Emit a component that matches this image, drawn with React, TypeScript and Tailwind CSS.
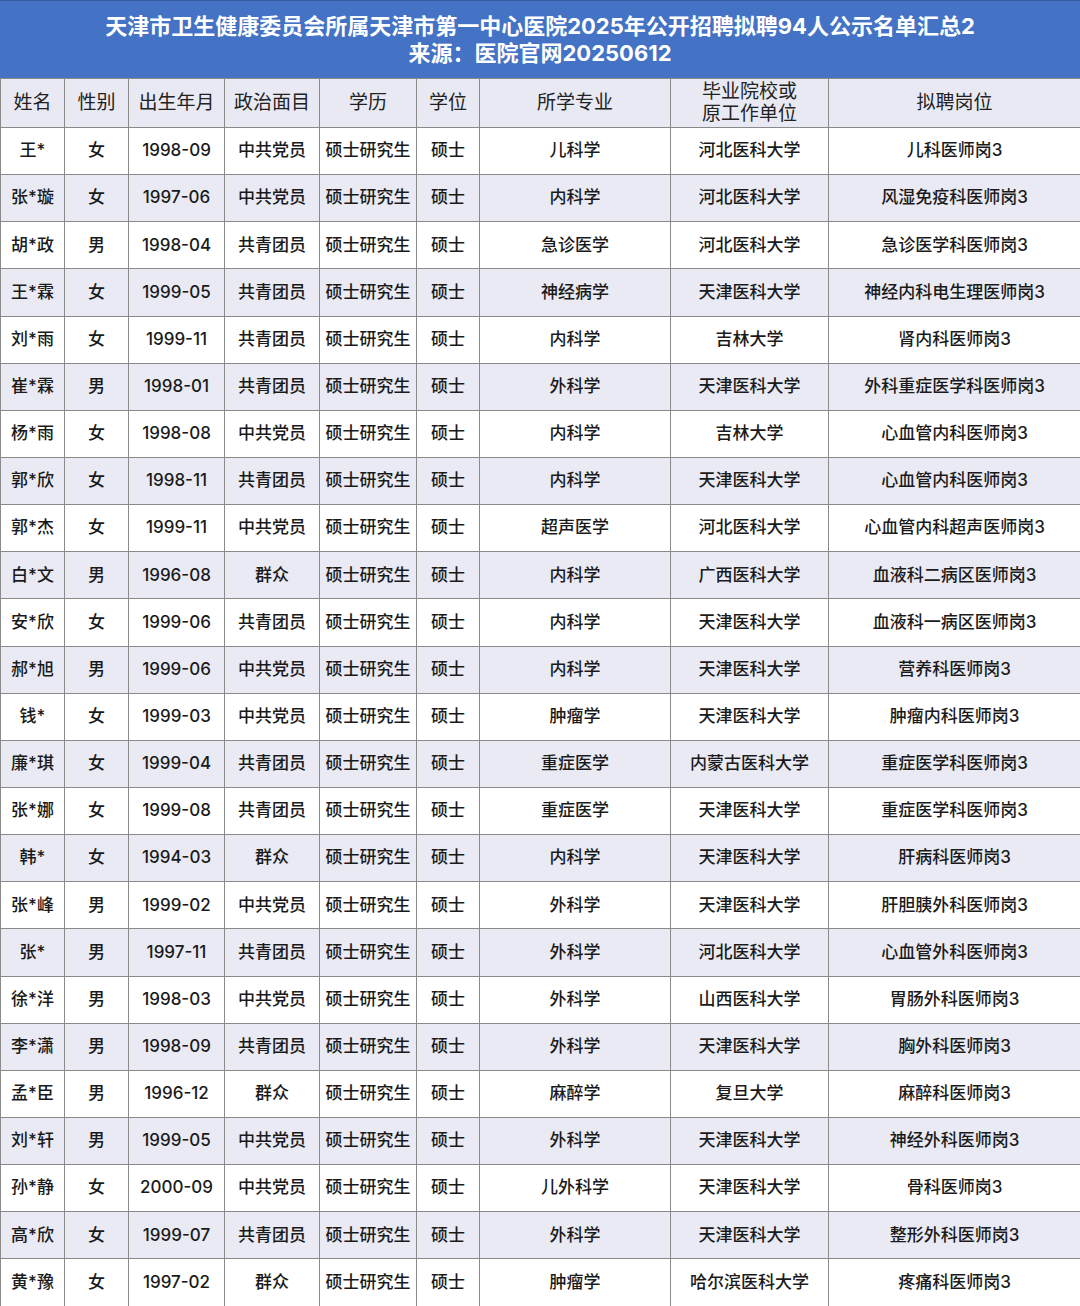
import React from 'react'

const headers = ['姓名', '性别', '出生年月', '政治面目', '学历', '学位', '所学专业', '毕业院校或\n原工作单位', '拟聘岗位']
const widths = ['w-[64px]', 'w-[64px]', 'w-[96px]', 'w-[95px]', 'w-[97px]', 'w-[63px]', 'w-[191px]', 'w-[158px]', 'w-[252px]']

const rows: string[][] = [
  ['王*', '女', '1998-09', '中共党员', '硕士研究生', '硕士', '儿科学', '河北医科大学', '儿科医师岗3'],
  ['张*璇', '女', '1997-06', '中共党员', '硕士研究生', '硕士', '内科学', '河北医科大学', '风湿免疫科医师岗3'],
  ['胡*政', '男', '1998-04', '共青团员', '硕士研究生', '硕士', '急诊医学', '河北医科大学', '急诊医学科医师岗3'],
  ['王*霖', '女', '1999-05', '共青团员', '硕士研究生', '硕士', '神经病学', '天津医科大学', '神经内科电生理医师岗3'],
  ['刘*雨', '女', '1999-11', '共青团员', '硕士研究生', '硕士', '内科学', '吉林大学', '肾内科医师岗3'],
  ['崔*霖', '男', '1998-01', '共青团员', '硕士研究生', '硕士', '外科学', '天津医科大学', '外科重症医学科医师岗3'],
  ['杨*雨', '女', '1998-08', '中共党员', '硕士研究生', '硕士', '内科学', '吉林大学', '心血管内科医师岗3'],
  ['郭*欣', '女', '1998-11', '共青团员', '硕士研究生', '硕士', '内科学', '天津医科大学', '心血管内科医师岗3'],
  ['郭*杰', '女', '1999-11', '中共党员', '硕士研究生', '硕士', '超声医学', '河北医科大学', '心血管内科超声医师岗3'],
  ['白*文', '男', '1996-08', '群众', '硕士研究生', '硕士', '内科学', '广西医科大学', '血液科二病区医师岗3'],
  ['安*欣', '女', '1999-06', '共青团员', '硕士研究生', '硕士', '内科学', '天津医科大学', '血液科一病区医师岗3'],
  ['郝*旭', '男', '1999-06', '中共党员', '硕士研究生', '硕士', '内科学', '天津医科大学', '营养科医师岗3'],
  ['钱*', '女', '1999-03', '中共党员', '硕士研究生', '硕士', '肿瘤学', '天津医科大学', '肿瘤内科医师岗3'],
  ['廉*琪', '女', '1999-04', '共青团员', '硕士研究生', '硕士', '重症医学', '内蒙古医科大学', '重症医学科医师岗3'],
  ['张*娜', '女', '1999-08', '共青团员', '硕士研究生', '硕士', '重症医学', '天津医科大学', '重症医学科医师岗3'],
  ['韩*', '女', '1994-03', '群众', '硕士研究生', '硕士', '内科学', '天津医科大学', '肝病科医师岗3'],
  ['张*峰', '男', '1999-02', '中共党员', '硕士研究生', '硕士', '外科学', '天津医科大学', '肝胆胰外科医师岗3'],
  ['张*', '男', '1997-11', '共青团员', '硕士研究生', '硕士', '外科学', '河北医科大学', '心血管外科医师岗3'],
  ['徐*洋', '男', '1998-03', '中共党员', '硕士研究生', '硕士', '外科学', '山西医科大学', '胃肠外科医师岗3'],
  ['李*潇', '男', '1998-09', '共青团员', '硕士研究生', '硕士', '外科学', '天津医科大学', '胸外科医师岗3'],
  ['孟*臣', '男', '1996-12', '群众', '硕士研究生', '硕士', '麻醉学', '复旦大学', '麻醉科医师岗3'],
  ['刘*轩', '男', '1999-05', '中共党员', '硕士研究生', '硕士', '外科学', '天津医科大学', '神经外科医师岗3'],
  ['孙*静', '女', '2000-09', '中共党员', '硕士研究生', '硕士', '儿外科学', '天津医科大学', '骨科医师岗3'],
  ['高*欣', '女', '1999-07', '共青团员', '硕士研究生', '硕士', '外科学', '天津医科大学', '整形外科医师岗3'],
  ['黄*豫', '女', '1997-02', '群众', '硕士研究生', '硕士', '肿瘤学', '哈尔滨医科大学', '疼痛科医师岗3'],
]

export default function App() {
  return (
    <div
      className="w-[1080px] h-[1306px] overflow-hidden bg-white text-[#1a1a1a]"
      style={{ fontFamily: 'Inter, "Noto Sans CJK SC", sans-serif' }}
    >
      <div className="h-[78px] bg-[#4472c4] border-t border-[#33599f] flex flex-col items-center justify-center text-white font-bold text-[22px] leading-[27px]">
        <div>天津市卫生健康委员会所属天津市第一中心医院2025年公开招聘拟聘94人公示名单汇总2</div>
        <div>来源：医院官网20250612</div>
      </div>
      <table className="border-collapse table-fixed w-[1080px]">
        <thead>
          <tr className="h-[49px] bg-[#e8e9f3]">
            {headers.map((h, i) => (
              <th
                key={i}
                className={`${widths[i]} border border-[#8a8a8a] font-normal text-[19px] leading-[22px] whitespace-pre-line text-center text-[#222] p-0`}
              >
                {h}
              </th>
            ))}
          </tr>
        </thead>
        <tbody>
          {rows.map((r, ri) => (
            <tr key={ri} className={`h-[47.15px] ${ri % 2 === 1 ? 'bg-[#e9eaf4]' : 'bg-white'}`}>
              {r.map((c, ci) => (
                <td
                  key={ci}
                  className="border border-[#8a8a8a] text-center text-[17px] font-medium p-0 whitespace-nowrap"
                >
                  {c}
                </td>
              ))}
            </tr>
          ))}
        </tbody>
      </table>
    </div>
  )
}
